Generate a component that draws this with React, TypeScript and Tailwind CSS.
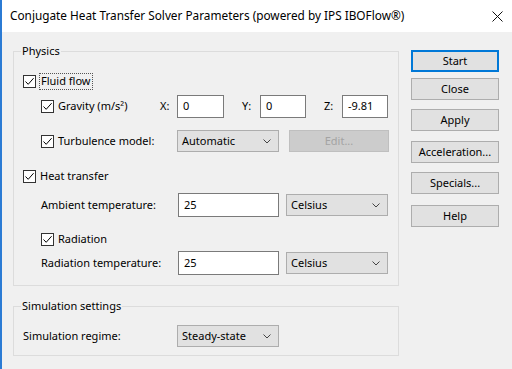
import { ReactNode } from "react"

const font = { fontFamily: '"Noto Sans", "Liberation Sans", sans-serif' }

function Check({ label, focus = false }: { label: string; focus?: boolean }) {
  return (
    <div className="flex items-center">
      <span className="w-[13px] h-[13px] border border-[#333333] bg-white flex items-center justify-center shrink-0">
        <svg width="11" height="11" viewBox="0 0 11 11">
          <path d="M1.5 5.5 L4.2 8.3 L9.6 2.2" stroke="#000" strokeWidth="1" fill="none" />
        </svg>
      </span>
      <span
        className={
          focus
            ? "ml-[3px] px-[1px] h-[17px] flex items-center border border-dotted border-[#555]"
            : "ml-[4px]"
        }
      >
        {label}
      </span>
    </div>
  )
}

function Field({ value, w, h = "h-[23px]" }: { value: string; w: string; h?: string }) {
  return (
    <div className={`${w} ${h} bg-white border border-[#7a7a7a] flex items-center pl-[5px] shrink-0`}>
      {value}
    </div>
  )
}

function Combo({ value, w = "w-[102px]" }: { value: string; w?: string }) {
  return (
    <div className={`${w} h-[22px] bg-[#e1e1e1] border border-[#adadad] flex items-center justify-between pl-[4px] pr-[7px] shrink-0`}>
      <span>{value}</span>
      <svg width="8" height="5" viewBox="0 0 8 5">
        <path d="M0.5 0.5 L4 4 L7.5 0.5" stroke="#444" strokeWidth="1" fill="none" />
      </svg>
    </div>
  )
}

function Group({ title, children, className = "" }: { title: string; children: ReactNode; className?: string }) {
  return (
    <fieldset className={`border border-[#dcdcdc] ${className}`}>
      <legend className="ml-[7px] px-[1px] leading-[14px]">{title}</legend>
      {children}
    </fieldset>
  )
}

function Btn({ label, primary = false, className = "" }: { label: string; primary?: boolean; className?: string }) {
  return (
    <button
      className={`w-[88px] h-[22px] bg-[#e1e1e1] flex items-center justify-center ${
        primary ? "border-2 border-[#0078d7]" : "border border-[#adadad]"
      } ${className}`}
    >
      {label}
    </button>
  )
}

export default function App() {
  return (
    <div className="w-[512px] h-[369px] flex flex-col border-l-2 border-[#2b7bd4] text-[11px] text-black overflow-hidden" style={font}>
      {/* Title bar */}
      <div className="h-[32px] bg-white flex items-center justify-between pl-[8px] pr-[9px] shrink-0">
        <span className="text-[11.8px]">Conjugate Heat Transfer Solver Parameters (powered by IPS IBOFlow®)</span>
        <svg width="11" height="11" viewBox="0 0 11 11">
          <path d="M0.5 0.5 L10.5 10.5 M10.5 0.5 L0.5 10.5" stroke="#111" strokeWidth="1" />
        </svg>
      </div>

      {/* Body */}
      <div className="flex-1 bg-[#f0f0f0] flex pl-[11px] pt-[12px]">
        <div className="w-[386px] flex flex-col">
          <Group title="Physics" className="h-[242px]">
            <div className="pl-[9px] pt-[15px] flex flex-col">
              <div className="h-[17px] flex items-center">
                <Check label="Fluid flow" focus />
              </div>

              <div className="h-[23px] mt-[5px] flex items-center">
                <div className="w-[137px] pl-[18px]">
                  <Check label="Gravity (m/s²)" />
                </div>
                <span className="w-[17px]">X:</span>
                <Field value="0" w="w-[47px]" />
                <span className="w-[18px] ml-[18px]">Y:</span>
                <Field value="0" w="w-[46px]" />
                <span className="w-[18px] ml-[18px]">Z:</span>
                <Field value="-9.81" w="w-[46px]" />
              </div>

              <div className="h-[22px] mt-[12px] flex items-center">
                <div className="w-[154px] pl-[18px]">
                  <Check label="Turbulence model:" />
                </div>
                <Combo value="Automatic" />
                <div className="w-[100px] h-[22px] ml-[10px] bg-[#cccccc] border border-[#bfbfbf] text-[#a3a3a3] flex items-center justify-center">
                  Edit...
                </div>
              </div>

              <div className="h-[17px] mt-[16px] flex items-center">
                <Check label="Heat transfer" />
              </div>

              <div className="h-[24px] mt-[8px] flex items-center">
                <span className="w-[155px] pl-[18px]">Ambient temperature:</span>
                <Field value="25" w="w-[101px]" h="h-[24px]" />
                <div className="ml-[7px]">
                  <Combo value="Celsius" />
                </div>
              </div>

              <div className="h-[17px] mt-[14px] flex items-center pl-[18px]">
                <Check label="Radiation" />
              </div>

              <div className="h-[24px] mt-[3px] flex items-center">
                <span className="w-[155px] pl-[18px]">Radiation temperature:</span>
                <Field value="25" w="w-[101px]" h="h-[24px]" />
                <div className="ml-[7px]">
                  <Combo value="Celsius" />
                </div>
              </div>
            </div>
          </Group>

          <Group title="Simulation settings" className="mt-[13px] h-[57px]">
            <div className="pl-[9px] pt-[12px] flex items-center">
              <span className="w-[154px]">Simulation regime:</span>
              <Combo value="Steady-state" />
            </div>
          </Group>
        </div>

        <div className="ml-[12px] pt-[6px] flex flex-col">
          <Btn label="Start" primary />
          <Btn label="Close" className="mt-[6px]" />
          <Btn label="Apply" className="mt-[9px]" />
          <Btn label="Acceleration..." className="mt-[10px]" />
          <Btn label="Specials..." className="mt-[9px]" />
          <Btn label="Help" className="mt-[11px]" />
        </div>
      </div>
    </div>
  )
}
